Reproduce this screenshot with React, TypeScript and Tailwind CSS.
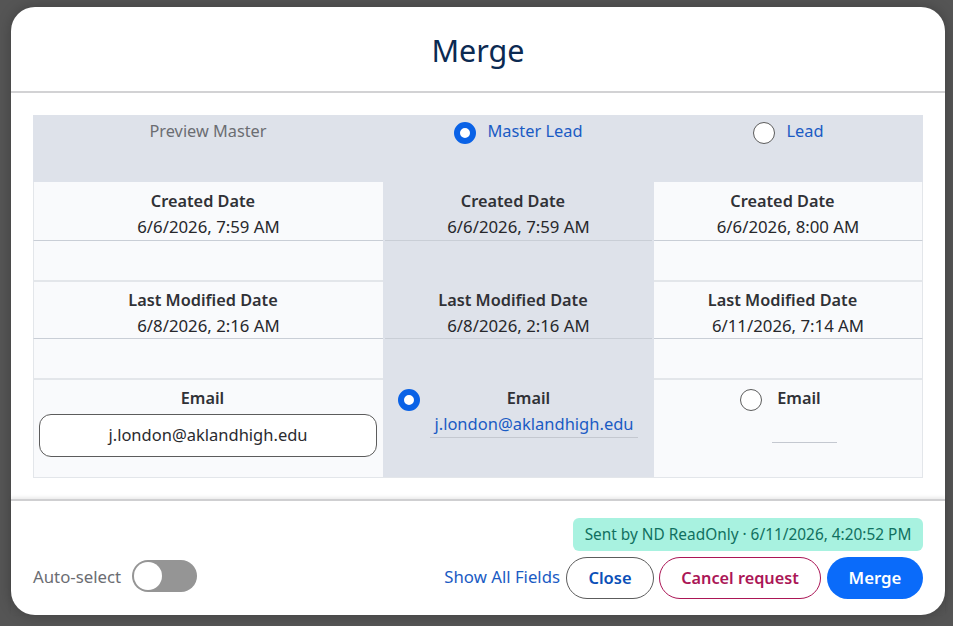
const FONT = "font-['Noto_Sans',sans-serif]"

function Radio({ checked }: { checked?: boolean }) {
  if (checked) {
    return <span className="block h-[22px] w-[22px] shrink-0 rounded-full border-[6px] border-[#0a62e6] bg-white" />
  }
  return <span className="block h-[22px] w-[22px] shrink-0 rounded-full border border-[#5c5c5c] bg-white" />
}

function Label({ children }: { children: string }) {
  return <span className="pr-[11px] text-[16.3px] leading-[24px] font-semibold text-[#303136]">{children}</span>
}

function InfoCell({
  label,
  value,
  className,
}: {
  label: string
  value: string
  className: string
}) {
  return (
    <div className={"flex flex-col items-center " + className}>
      <Label>{label}</Label>
      <span className="mt-[1px] text-[16.8px] leading-[26px] text-[#27282c]">{value}</span>
    </div>
  )
}

export default function App() {
  return (
    <div className={"h-[626px] w-[953px] overflow-hidden bg-[#555555] pt-[7px] pl-[11px] " + FONT}>
      <div className="flex h-[608px] w-[934px] flex-col rounded-[24px] bg-white shadow-[0_0_14px_rgba(0,0,0,0.25)]">
        <div className="flex h-[86px] shrink-0 items-center justify-center border-b-2 border-[#d2d2d4] pt-[3px]">
          <h1 className="text-[30.5px] leading-none text-[#0b2a52]">Merge</h1>
        </div>

        <div className="h-[406px] shrink-0 px-[22px] pt-[22px]">
          <div className="grid w-[890px] grid-cols-[350px_271px_269px] grid-rows-[67px_59px_41px_57px_41px_98px] bg-[#dee2ea]">
            {/* header row */}
            <div className="flex justify-center pt-[4px]">
              <span className="text-[16.3px] leading-[24px] text-[#6b6d72]">Preview Master</span>
            </div>
            <div className="flex items-start justify-center gap-[11px] pt-[7px]">
              <Radio checked />
              <span className="-mt-[3px] text-[16.4px] leading-[24px] text-[#1a5bc4]">Master Lead</span>
            </div>
            <div className="flex items-start justify-center gap-[11px] pt-[7px]">
              <Radio />
              <span className="-mt-[3px] text-[16.4px] leading-[24px] text-[#1a5bc4]">Lead</span>
            </div>

            {/* created */}
            <InfoCell
              label="Created Date"
              value="6/6/2026, 7:59 AM"
              className="border-b border-l border-[#c9ced6] border-l-[#e3e6ea] bg-[#f9fafc] pt-[7px]"
            />
            <div className="mx-[2px] border-b border-[#c9ced6]">
              <InfoCell label="Created Date" value="6/6/2026, 7:59 AM" className="pt-[7px]" />
            </div>
            <InfoCell
              label="Created Date"
              value="6/6/2026, 8:00 AM"
              className="border-r border-b border-[#c9ced6] border-r-[#e3e6ea] bg-[#f9fafc] pt-[7px]"
            />

            <div className="border-b-2 border-l border-[#e3e6ea] bg-[#f9fafc]" />
            <div />
            <div className="border-r border-b-2 border-[#e3e6ea] bg-[#f9fafc]" />

            {/* last modified */}
            <InfoCell
              label="Last Modified Date"
              value="6/8/2026, 2:16 AM"
              className="border-b border-l border-[#c9ced6] border-l-[#e3e6ea] bg-[#f9fafc] pt-[6px]"
            />
            <div className="mx-[2px] border-b border-[#c9ced6]">
              <InfoCell label="Last Modified Date" value="6/8/2026, 2:16 AM" className="pt-[6px]" />
            </div>
            <InfoCell
              label="Last Modified Date"
              value="6/11/2026, 7:14 AM"
              className="border-r border-b border-[#c9ced6] border-r-[#e3e6ea] bg-[#f9fafc] pt-[6px]"
            />

            <div className="border-b-2 border-l border-[#e3e6ea] bg-[#f9fafc]" />
            <div />
            <div className="border-r border-b-2 border-[#e3e6ea] bg-[#f9fafc]" />

            {/* email */}
            <div className="flex flex-col items-center border-b border-l border-[#e3e6ea] bg-[#f9fafc] pt-[6px] pr-[6px] pl-[5px]">
              <Label>Email</Label>
              <div className="mt-[4px] flex h-[43px] w-[338px] items-center justify-center rounded-[12px] border border-[#5c5c5c] bg-white text-[16.5px] text-[#2a2b2f]">
                j.london@aklandhigh.edu
              </div>
            </div>
            <div className="flex items-start border-b border-[#e3e6ea] pt-[6px] pl-[15px]">
              <span className="mt-[3px]">
                <Radio checked />
              </span>
              <div className="ml-[10px] flex w-[208px] flex-col items-center">
                <Label>Email</Label>
                <span className="mt-[1px] w-full border-b border-[#c4c8d0] text-center text-[16.5px] leading-[26px] text-[#1a5bc4]">
                  j.london@aklandhigh.edu
                </span>
              </div>
            </div>
            <div className="flex items-start border-r border-b border-[#e3e6ea] bg-[#f9fafc] pt-[6px] pl-[86px]">
              <span className="mt-[3px]">
                <Radio />
              </span>
              <div className="ml-[10px] flex w-[65px] flex-col items-center">
                <Label>Email</Label>
                <div className="mt-[32px] h-px w-full bg-[#c4c8d0]" />
              </div>
            </div>
          </div>
        </div>

        <div className="flex flex-1 items-end justify-between border-t-2 border-[#cfcfd1] px-[22px] pb-[16px] shadow-[0_-2px_3px_rgba(0,0,0,0.08)]">
          <div className="flex items-center gap-[11px] pb-[7px]">
            <span className="pt-[2px] text-[16.8px] text-[#6b6d72]">Auto-select</span>
            <span className="flex h-[32px] w-[65px] items-center rounded-full bg-[#959595] pl-[2px]">
              <span className="h-[28px] w-[28px] rounded-full bg-white" />
            </span>
          </div>
          <div className="flex flex-col items-end gap-[6px]">
            <div className="flex h-[33px] w-[350px] items-center justify-center rounded-[6px] bg-[#a8f2e0] pt-[1px] text-[15.4px] text-[#10705f]">
              Sent by ND ReadOnly · 6/11/2026, 4:20:52 PM
            </div>
            <div className="flex items-center">
              <a className="mr-[6px] mb-[3px] text-[16.75px] text-[#1a5bc4]">Show All Fields</a>
              <button className="h-[42px] w-[88px] rounded-full border border-[#5c5c5c] bg-white text-[16.5px] font-semibold text-[#0b50b8]">
                Close
              </button>
              <button className="ml-[5px] h-[42px] w-[162px] rounded-full border border-[#ab1656] bg-white text-[16.25px] font-semibold text-[#ab1656]">
                Cancel request
              </button>
              <button className="ml-[6px] h-[42px] w-[96px] rounded-full bg-[#0a6bfa] text-[16.8px] font-semibold text-white">
                Merge
              </button>
            </div>
          </div>
        </div>
      </div>
    </div>
  )
}
